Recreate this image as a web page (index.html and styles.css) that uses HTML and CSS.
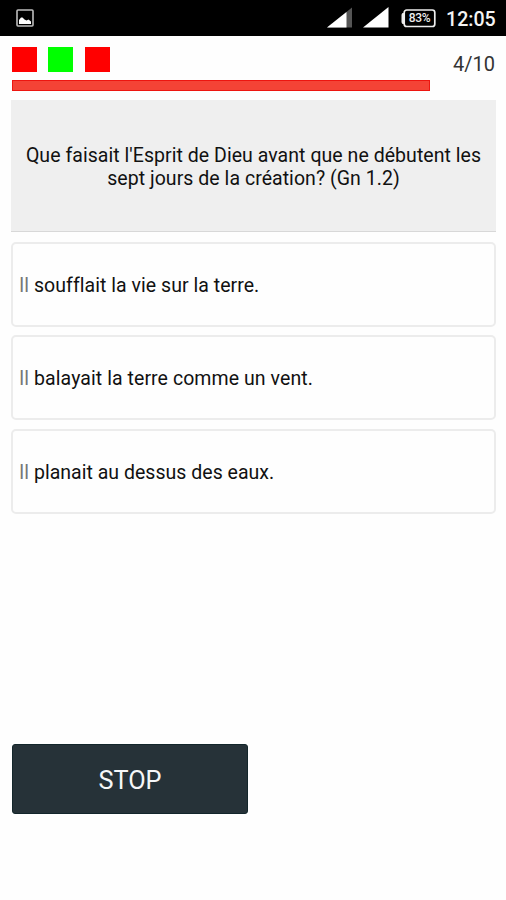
FILE: index.html
```html
<!DOCTYPE html>
<html lang="fr">
<head>
<meta charset="utf-8">
<title>Quiz</title>
<link rel="stylesheet" href="styles.css">
</head>
<body>
<header class="status">
  <svg class="status-photo" width="18" height="18" viewBox="0 0 18 18"><rect x="1" y="1" width="16" height="16" rx="1" fill="none" stroke="#bdbdbd" stroke-width="1.6"/><path d="M3 15V11l2-2.400 1.500-.2 2 2 2 1.200 2-1 2.500 2V15z" fill="#fff"/></svg>
  <div class="status-right">
    <svg width="26" height="21" viewBox="0 0 26 21"><path d="M0 20.500 25 .5v20z" fill="#555"/><path d="M0 20.500 19.500 5v15.500z" fill="#fff"/></svg>
    <svg class="signal" width="26" height="21" viewBox="0 0 26 21"><path d="M0 20.500 25.500 0v20.500z" fill="#fff"/></svg>
    <svg class="battery" width="35" height="19" viewBox="0 0 35 19"><rect x="3.200" y="1" width="30.600" height="16.500" rx="2.500" fill="none" stroke="#eee" stroke-width="1.700"/><path d="M3 4H1.500Q.5 5 .5 6v7q0 1 1 2H3z" fill="#eee"/><text class="battery-text" x="18.500" y="13.200" text-anchor="middle">83%</text></svg>
    <span class="clock">12:05</span>
  </div>
</header>
<main class="quiz">
  <div class="score">
    <div class="marks"><i class="mark bad"></i><i class="mark good"></i><i class="mark bad"></i></div>
    <span class="count">4/10</span>
  </div>
  <div class="timer"></div>
  <section class="question"><p>Que faisait l'Esprit de Dieu avant que ne débutent les</p><p>sept jours de la création? (Gn 1.2)</p></section>
  <div class="answers">
    <div class="answer first"><span><b>Il</b> soufflait la vie sur la terre.</span></div>
    <div class="answer"><span><b>Il</b> balayait la terre comme un vent.</span></div>
    <div class="answer last"><span><b>Il</b> planait au dessus des eaux.</span></div>
  </div>
  <div class="stop">STOP</div>
</main>
</body>
</html>
```

FILE: styles.css
```css
* { box-sizing: border-box; }
body {
  margin: 0;
  height: 900px;
  overflow: hidden;
  background: #fefefe;
  color: #111;
  font-family: Roboto, "Liberation Sans", sans-serif;
  font-size: 19.5px;
  font-variant-ligatures: none;
}
p { margin: 0; }
.status {
  height: 35.500px;
  background: #000;
  display: flex;
  justify-content: space-between;
  padding: 0 10px 0 16px;
}
.status-photo { margin-top: 9px; }
.status-right { display: flex; align-items: flex-start; }
.status-right svg { margin-top: 7px; }
.status-right .signal { margin: 7px 0 0 10px; }
.status-right .battery { margin: 9px 0 0 12px; }
.battery-text { font-size: 12px; font-weight: 500; letter-spacing: -0.3px; fill: #eee; }
.clock {
  width: 50px;
  margin-left: 10px;
  color: #f4f4f4;
  font-size: 19.6px;
  font-weight: 500;
  line-height: 39px;
  white-space: nowrap;
}
.quiz { padding: 0 10px 0 12px; }
.score { display: flex; justify-content: space-between; height: 44px; }
.marks { display: flex; gap: 11.300px; padding-top: 11.500px; }
.mark { width: 25px; height: 25px; }
.bad { background: #f00; }
.good { background: #0f0; }
.count { margin-right: 1px; font-size: 20px; line-height: 57px; color: #333; white-space: nowrap; }
.timer { width: 418px; height: 11px; background: #f44336; border: 1px solid #ed1510; }
.question {
  height: 132px;
  margin: 9.500px 0 9.500px -1px;
  padding-top: 44px;
  background: #efefef;
  border-bottom: 1px solid #d8d8d8;
  text-align: center;
  letter-spacing: 0.045px;
  line-height: 23px;
  white-space: nowrap;
}
.answers { margin-left: -1px; }
.answer {
  height: 85px;
  margin-bottom: 8px;
  padding: 2px 0 0 6px;
  border: 2px solid #ececec;
  border-radius: 5px;
  background: #fefefe;
  display: flex;
  align-items: center;
  letter-spacing: 0.07px;
  white-space: nowrap;
}
.answer b { font-weight: 400; color: #777; }
.answer.first { letter-spacing: 0.04px; }
.answer.last { margin-top: 9px; padding-top: 3px; letter-spacing: 0.02px; }
.stop {
  width: 236px;
  height: 70px;
  margin-top: 230px;
  background: #263238;
  border: 1px solid #13262b;
  border-radius: 3px;
  color: #f5f7f8;
  font-size: 25.3px;
  line-height: 71px;
  text-align: center;
}
```
